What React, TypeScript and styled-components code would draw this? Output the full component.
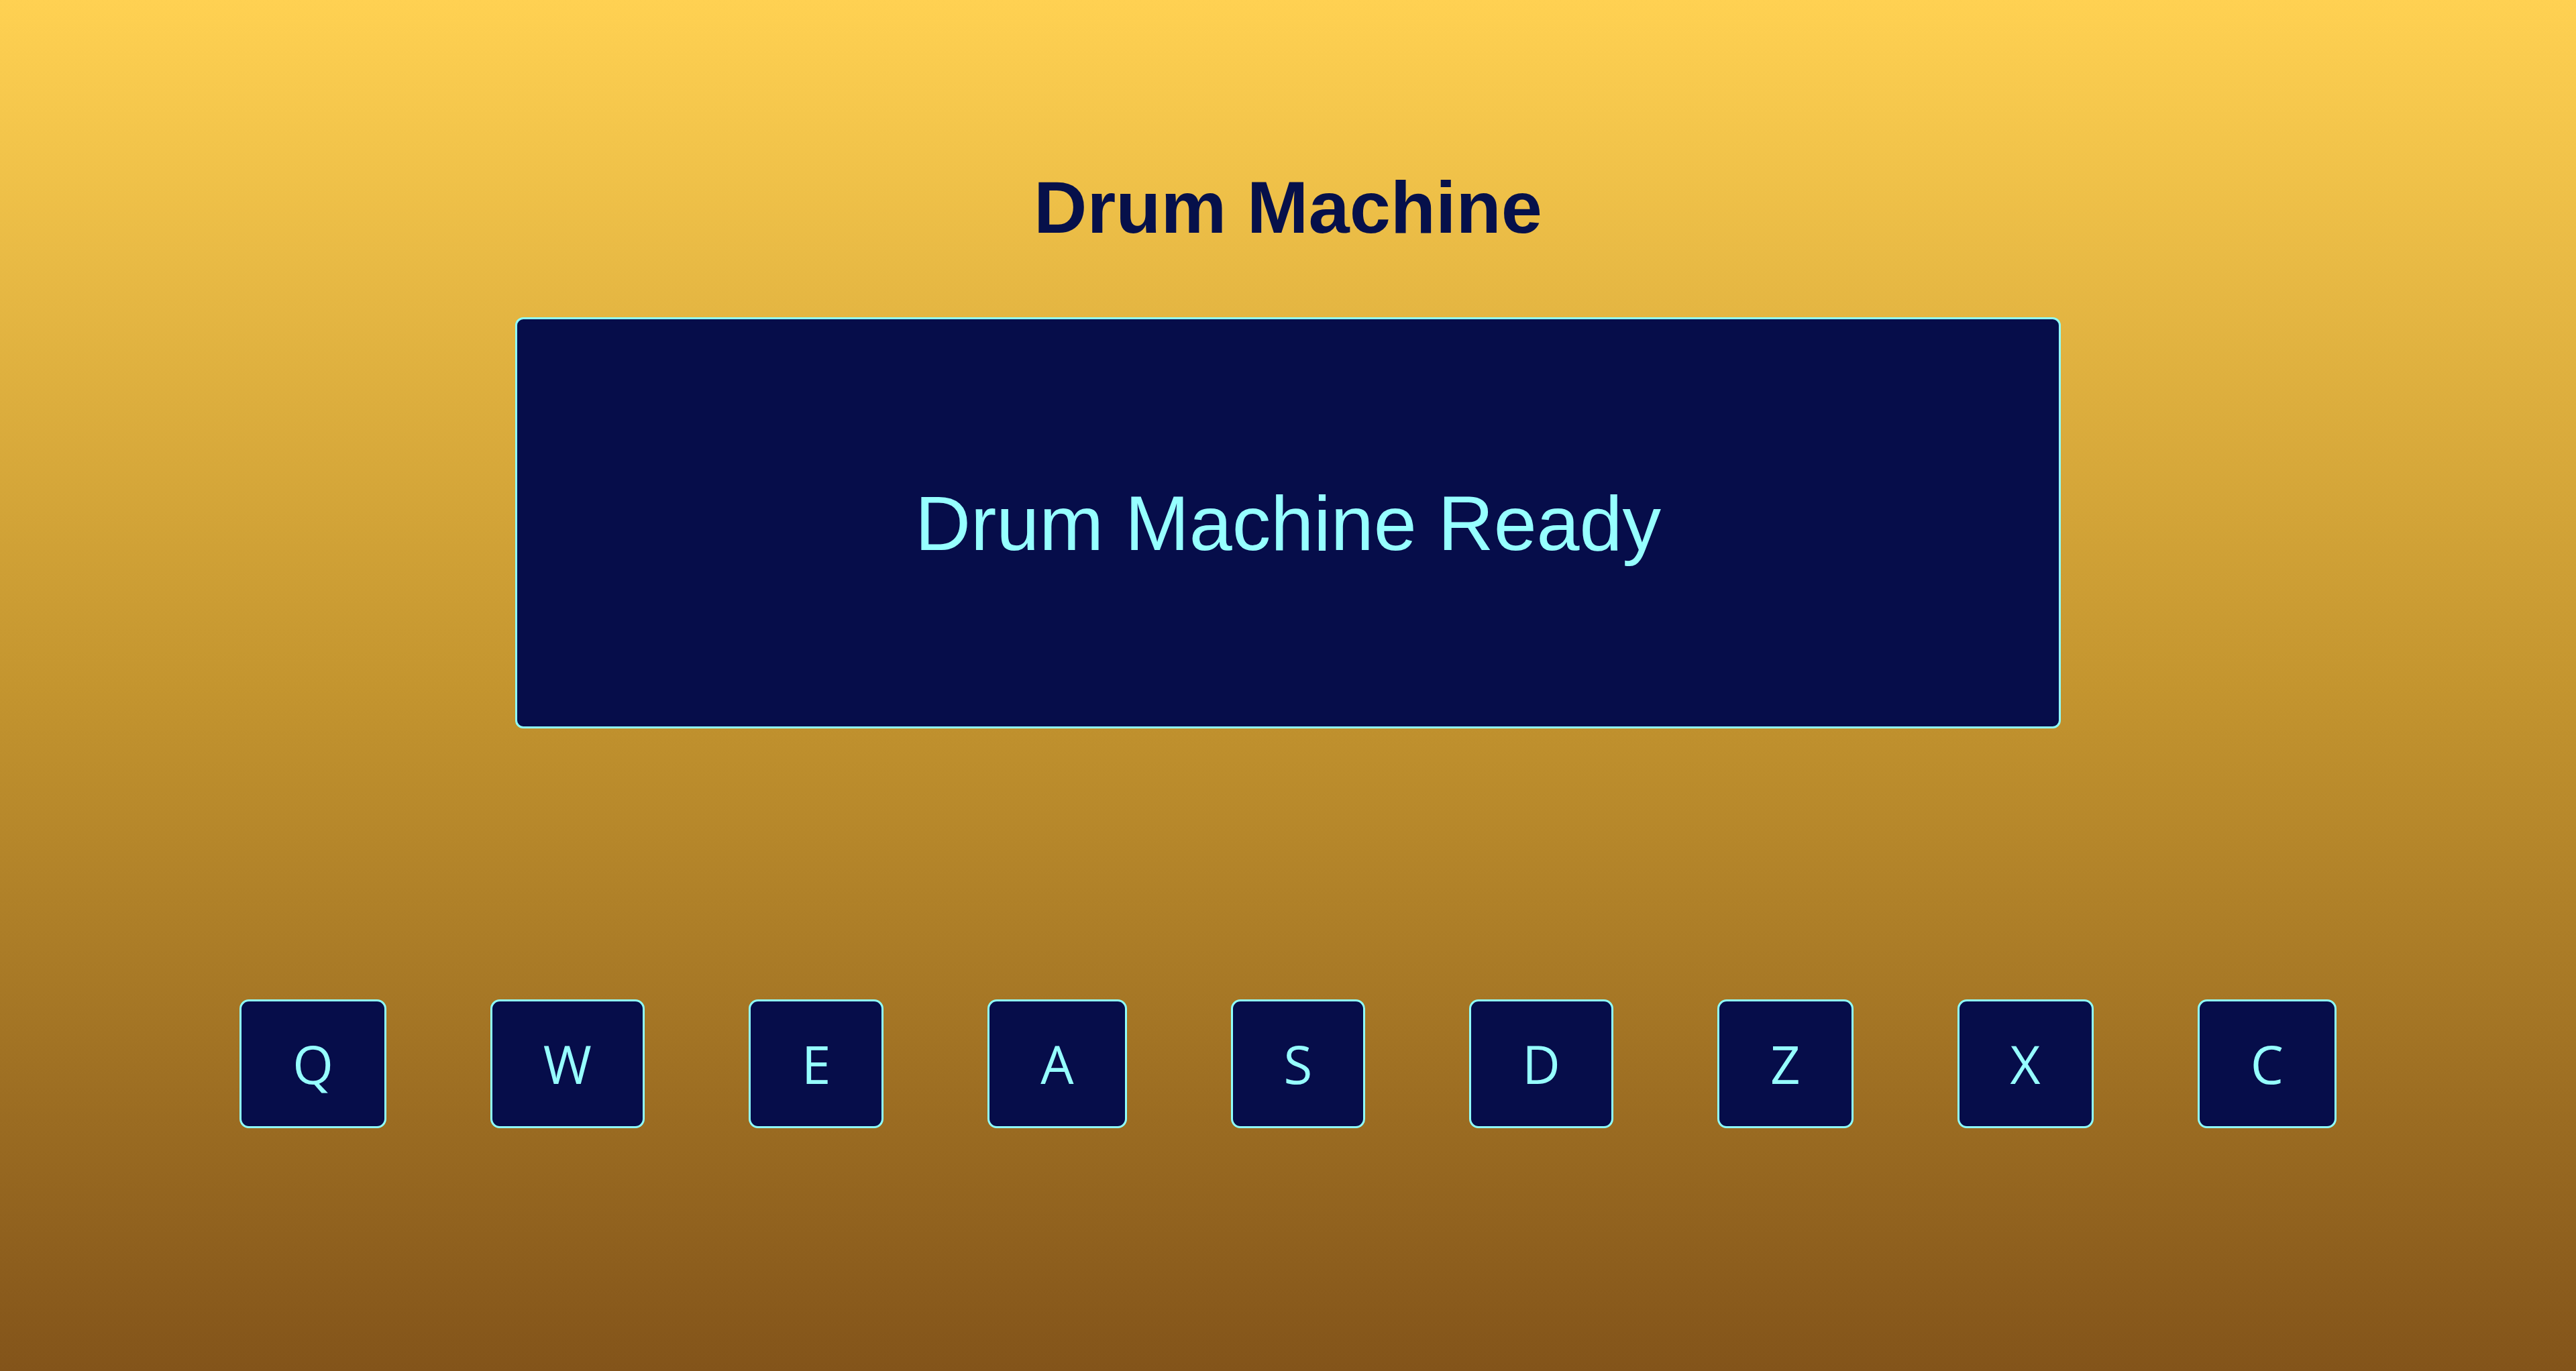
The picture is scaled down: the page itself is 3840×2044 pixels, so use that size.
import React from "react";
import styled, { createGlobalStyle } from "styled-components";

const GlobalStyle = createGlobalStyle`
  html, body {
    margin: 0;
    padding: 0;
  }
  body {
    font-family: "Liberation Sans", Arial, sans-serif;
  }
`;

const Page = styled.div`
  min-height: 100vh;
  box-sizing: border-box;
  background: linear-gradient(180deg, #ffd152 0%, #c4952f 50%, #83541a 100%);
  display: flex;
  flex-direction: column;
  align-items: center;
  padding-top: 246px;
`;

const Title = styled.h1`
  margin: 0;
  font-family: "Liberation Sans", Arial, sans-serif;
  font-weight: 700;
  font-size: 110px;
  line-height: 126px;
  color: #06104a;
`;

const Display = styled.div`
  margin-top: 101px;
  box-sizing: border-box;
  width: 2304px;
  height: 613px;
  background: #060d4a;
  border: 3px solid #8ffffc;
  border-radius: 12px;
  display: flex;
  align-items: center;
  justify-content: center;
  color: #96ffff;
  font-family: "Liberation Sans", Arial, sans-serif;
  font-size: 115px;
`;

const PadRow = styled.div`
  margin-top: 404px;
  display: flex;
  gap: 155px;
  justify-content: center;
`;

const Pad = styled.button`
  box-sizing: border-box;
  height: 192px;
  padding: 0 76px;
  background: #060d4a;
  border: 3px solid #8ffffc;
  border-radius: 14px;
  color: #96ffff;
  font-family: "Open Sans", "Noto Sans", sans-serif;
  font-size: 78px;
  line-height: 106px;
  cursor: pointer;
  display: flex;
  align-items: center;
  justify-content: center;
`;

const keys = ["Q", "W", "E", "A", "S", "D", "Z", "X", "C"];

export default function App() {
  return (
    <>
      <GlobalStyle />
      <Page>
        <Title>Drum Machine</Title>
        <Display>Drum Machine Ready</Display>
        <PadRow>
          {keys.map((k) => (
            <Pad key={k}>{k}</Pad>
          ))}
        </PadRow>
      </Page>
    </>
  );
}
